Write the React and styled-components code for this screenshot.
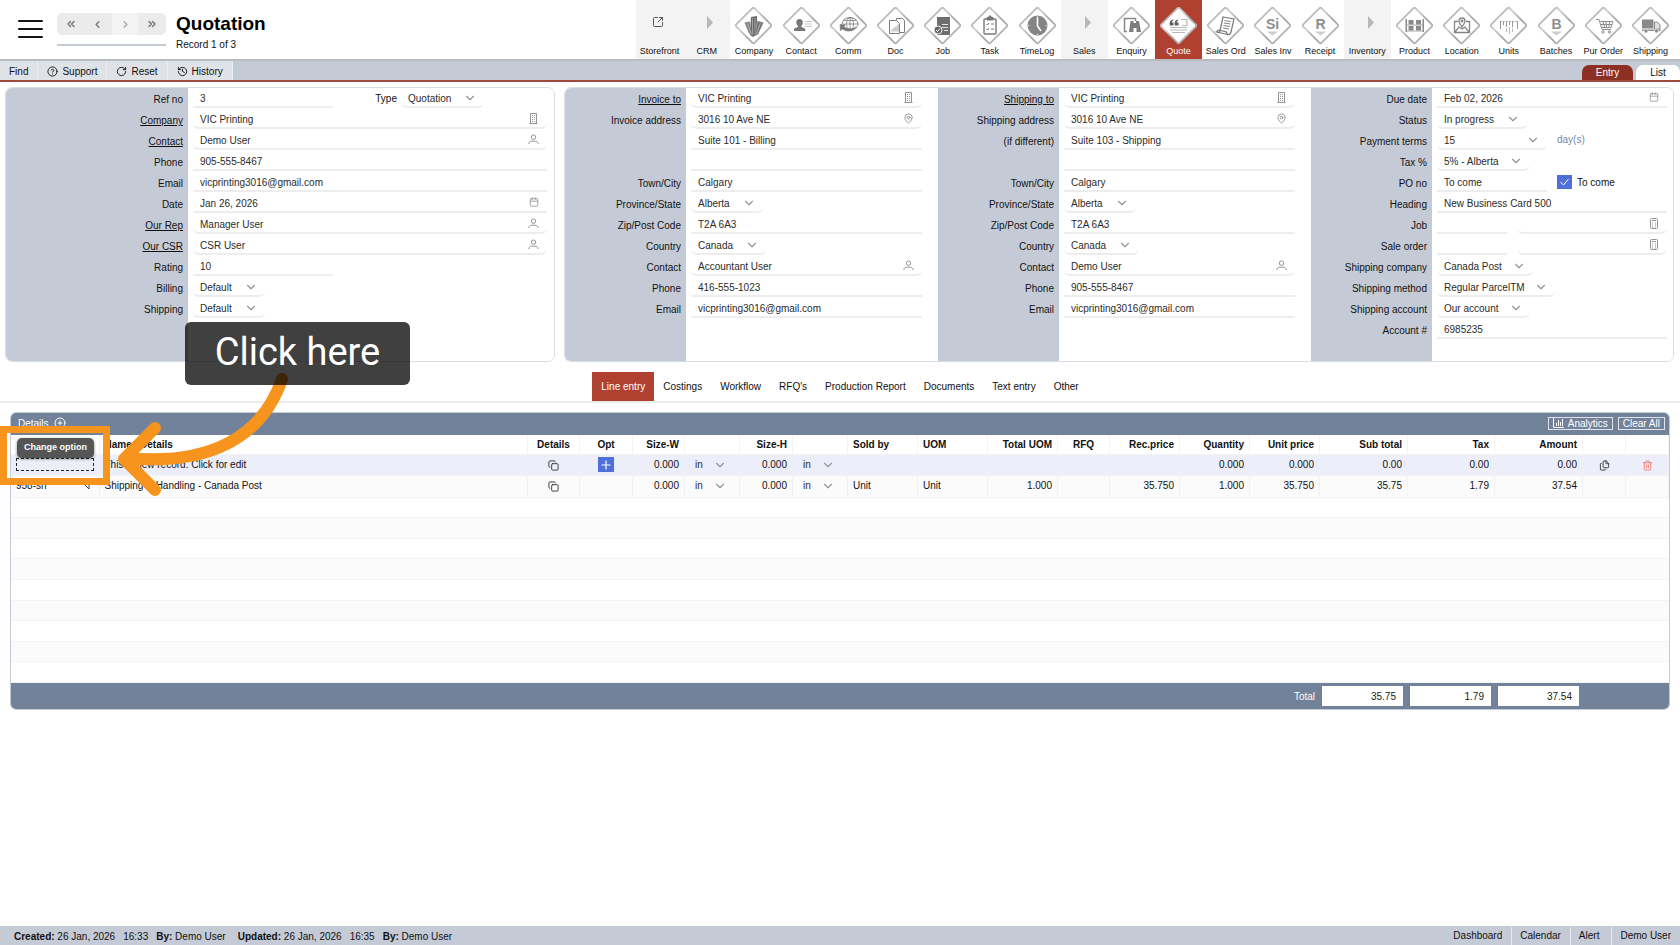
import { useState } from "react";
import styled, { createGlobalStyle } from "styled-components";
import {
  Calendar,
  ChevronDown,
  ChevronLeft,
  ChevronRight,
  ChevronsLeft,
  ChevronsRight,
  CircleHelp,
  CirclePlus,
  Copy,
  Files,
  History,
  MapPin,
  Plus,
  RotateCw,
  SquareArrowOutUpRight,
  Trash2,
} from "lucide-react";

const GlobalStyle = createGlobalStyle`
  * { box-sizing: border-box; }
  body {
    margin: 0;
    background: #fff;
    color: #111;
    font-family: "Liberation Sans", Arial, sans-serif;
    font-size: 10px;
  }
  button, input, select {
    font: inherit;
    color: inherit;
    margin: 0;
  }
  button { cursor: pointer; }
`;

const Page = styled.div`
  position: relative;
  display: flex;
  flex-direction: column;
  min-height: 100vh;
`;

const Defs = styled.svg`
  position: absolute;
`;

const Header = styled.header`
  display: flex;
  height: 61px;
  border-bottom: 2px solid #b9bbc0;
`;

const MenuButton = styled.button`
  display: flex;
  flex-direction: column;
  gap: 6px;
  width: 25px;
  height: 18px;
  margin: 20px 14px 0 18px;
  padding: 0;
  border: none;
  background: none;

  span {
    height: 2px;
    border-radius: 1px;
    background: #151515;
  }
`;

const Pager = styled.div`
  width: 109px;
  height: 33px;
  margin-top: 13px;
  border-bottom: 2px solid #c5cbd6;
`;

const PagerButtons = styled.div`
  display: flex;
  height: 22px;
  border-radius: 5px;
  overflow: hidden;
`;

const PagerButton = styled.button`
  display: flex;
  flex: 1;
  align-items: center;
  justify-content: center;
  padding: 0;
  border: none;
  background: #ebebeb;
  color: #777;

  &:disabled {
    background: #f3f3f3;
    color: #aaa;
  }
`;

const TitleBlock = styled.div`
  margin: 13px 0 0 10px;
`;

const Title = styled.h1`
  margin: 0;
  font-size: 19px;
  line-height: 22px;
  color: #000;
`;

const Record = styled.div`
  margin-top: 3px;
  line-height: 13px;
`;

const Modules = styled.nav`
  display: grid;
  grid-template-columns: repeat(22, 1fr);
  width: 1038px;
  margin: 0 6px 0 auto;
`;

const ModuleLink = styled.a`
  display: flex;
  flex-direction: column;
  align-items: center;
  padding-top: 7px;
  background: ${(p) => (p.$active ? "#b04030" : p.$group ? "#f3f3f3" : "#fff")};
  color: ${(p) => (p.$active ? "#fff" : "#111")};
  font-size: 9px;
  line-height: 12px;
  white-space: nowrap;
  text-decoration: none;
`;

const Toolbar = styled.div`
  display: flex;
  height: 21px;
  border-bottom: 2px solid #a04a3f;
  background: #c5cbd6;
`;

const ToolButton = styled.button`
  display: flex;
  align-items: center;
  gap: 4px;
  padding: 1px 9px 0;
  border: none;
  border-right: 1px solid #eceef1;
  background: #dfe3e8;
`;

const ViewTabs = styled.div`
  display: flex;
  gap: 3px;
  align-items: flex-end;
  margin-left: auto;
`;

const ViewTab = styled.button`
  width: ${(p) => (p.$active ? 51 : 44)}px;
  height: 15px;
  padding: 0;
  border: none;
  border-radius: 7px 7px 0 0;
  background: ${(p) => (p.$active ? "#8d3023" : "#fff")};
  color: ${(p) => (p.$active ? "#fff" : "#111")};
`;

const Panels = styled.form`
  display: grid;
  grid-template-columns: minmax(0, 550fr) minmax(0, 1110fr);
  gap: 9px;
  padding: 5px 6px 0 5px;
`;

const Panel = styled.div`
  display: flex;
  min-height: 275px;
  border: 1px solid #d8dee6;
  border-radius: 7px;
  overflow: hidden;
`;

const Section = styled.section`
  flex: ${(p) => p.$grow || 1};
  min-width: 0;
  background: linear-gradient(to right, #c5cbd6 ${(p) => p.$label}px, #fff ${(p) => p.$label}px);
`;

const Row = styled.div`
  display: grid;
  grid-template-columns: ${(p) => p.$label}px minmax(0, 1fr);
  height: 21px;
`;

const Label = styled.label`
  padding: 5px 5px 0 0;
  line-height: 13px;
  text-align: right;
  text-decoration: ${(p) => (p.$link ? "underline" : "none")};
`;

const Values = styled.div`
  display: flex;
  gap: 10px;
  padding: 0 ${(p) => p.$right}px 0 5px;
`;

const Field = styled.div`
  position: relative;
  flex: ${(p) => (p.$w ? `0 0 ${p.$w}px` : "1")};
  height: 20px;
  color: #2b2b2b;

  > svg {
    position: absolute;
    top: 4px;
    right: 8px;
    color: #949494;
    pointer-events: none;
  }
`;

const TextInput = styled.input`
  display: block;
  width: 100%;
  height: 20px;
  padding: 2px 7px 0;
  border: none;
  border-bottom: 2px solid #ededed;
  border-radius: ${(p) => (p.$round ? 6 : 0)}px;
  background: transparent;
  outline: none;
`;

const SelectInput = styled.select`
  display: block;
  width: 100%;
  height: 20px;
  padding: ${(p) => (p.$plain ? "0 5px" : "2px 7px 0")};
  border: none;
  border-bottom: ${(p) => (p.$plain ? "none" : "2px solid #ededed")};
  border-radius: 6px;
  background: transparent;
  appearance: none;
  outline: none;
`;

const SideLabel = styled.label`
  margin-left: auto;
  margin-right: -6px;
  line-height: 21px;
`;

const Unit = styled.span`
  line-height: 20px;
  color: #7388ad;
`;

const CheckLabel = styled.label`
  display: flex;
  align-items: center;
  gap: 5px;
  height: 20px;
`;

const CheckInput = styled.input`
  width: 15px;
  height: 14px;
  appearance: none;
  background: #4f70d8;
`;

const CheckWrap = styled.span`
  position: relative;
  display: flex;

  svg {
    position: absolute;
    top: 2px;
    left: 2px;
    pointer-events: none;
  }
`;

const Tabs = styled.nav`
  display: flex;
  justify-content: center;
  margin-top: 10px;
  border-bottom: 2px solid #ececec;
`;

const Tab = styled.button`
  height: 29px;
  padding: 0 9px;
  border: none;
  background: ${(p) => (p.$active ? "#b04030" : "transparent")};
  color: ${(p) => (p.$active ? "#fff" : "#111")};
`;

const Details = styled.section`
  margin: 9px 10px 0;
  border: 1px solid #c3cbd6;
  border-radius: 6px;
  overflow: hidden;
`;

const DetailsBar = styled.div`
  display: flex;
  align-items: center;
  gap: 5px;
  height: 22px;
  padding: 0 4px 2px 7px;
  background: #71829a;
  color: #fff;
`;

const DetailsTitle = styled.h2`
  margin: 0;
  font-size: 10px;
  font-weight: normal;
`;

const IconButton = styled.button`
  display: inline-flex;
  align-items: center;
  justify-content: center;
  padding: 0;
  border: none;
  background: none;
  color: ${(p) => p.$color || "inherit"};
  vertical-align: middle;
`;

const BarActions = styled.div`
  display: flex;
  gap: 5px;
  margin-left: auto;
`;

const BarButton = styled.button`
  display: flex;
  align-items: center;
  gap: 4px;
  height: 13px;
  padding: 0 4px;
  border: 1px solid #dfe3e9;
  background: transparent;
  color: #fff;
`;

const Table = styled.table`
  width: 100%;
  height: 248px;
  border-collapse: collapse;
  table-layout: fixed;
`;

const Tr = styled.tr`
  background: ${(p) => (p.$selected ? "#eceefa" : p.$alt ? "#fbfbfb" : "#fff")};
  border-bottom: 1px solid #f3f3f3;
`;

const Th = styled.th`
  height: 19px;
  padding: 1px 5px 0;
  border-right: 1px solid #f3f3f3;
  text-align: ${(p) => p.$align};
  white-space: nowrap;
`;

const Td = styled.td`
  height: 20px;
  padding: 0 5px;
  border-right: ${(p) => (p.$open ? "none" : "1px solid #f1f1f3")};
  text-align: ${(p) => p.$align};
  line-height: 12px;
  white-space: nowrap;
`;

const AddButton = styled(IconButton)`
  width: 16px;
  height: 15px;
  background: #4f70d8;
  color: #fff;
`;

const CodeCell = styled.div`
  display: flex;
  align-items: center;
  justify-content: space-between;
  padding-right: 4px;
`;

const CodeInput = styled.input`
  display: block;
  width: 100%;
  height: 13px;
  padding: 0 2px;
  border: 1px dashed #222;
  background: transparent;
  outline: none;
`;

const TotalBar = styled.div`
  display: flex;
  align-items: center;
  justify-content: flex-end;
  gap: 7px;
  height: 26px;
  padding-right: 90px;
  background: #71829a;
  color: #fff;
`;

const TotalInput = styled.input`
  width: 81px;
  height: 20px;
  padding: 0 7px;
  border: none;
  background: #fff;
  color: #222;
  text-align: right;
`;

const StatusBar = styled.footer`
  display: flex;
  align-items: center;
  height: 19px;
  margin-top: auto;
  padding: 1px 0 0 14px;
  background: #c5cbd6;
`;

const Stamp = styled.span`
  margin-right: ${(p) => p.$gap || 8}px;
`;

const StatusLinks = styled.nav`
  display: flex;
  align-self: stretch;
  margin-left: auto;
`;

const StatusLink = styled.a`
  padding: 0 9px 0 8px;
  border-left: 1px solid #e6e9ee;
  color: inherit;
  line-height: 18px;
  text-decoration: none;

  &:first-child { border-left: none; }
  &:nth-child(3) { padding-right: 12px; }
`;

// Guide overlay

const HighlightBox = styled.div`
  position: absolute;
  top: 426px;
  left: 0;
  width: 110px;
  height: 59px;
  border: 7px solid #f7941d;
`;

const HintTip = styled.div`
  position: absolute;
  top: 438px;
  left: 17px;
  width: 77px;
  height: 20px;
  border-radius: 5px;
  background: #555;
  box-shadow: 0 1px 3px rgba(0, 0, 0, 0.5);
  color: #fff;
  font-size: 9px;
  font-weight: bold;
  line-height: 19px;
  text-align: center;
`;

const Arrow = styled.svg`
  position: absolute;
  top: 360px;
  left: 110px;
  pointer-events: none;
`;

const Callout = styled.div`
  position: absolute;
  top: 322px;
  left: 185px;
  width: 225px;
  height: 63px;
  border-radius: 6px;
  background: rgba(0, 0, 0, 0.75);
  color: #fff;
  font-family: Roboto, sans-serif;
  font-size: 38px;
  line-height: 61px;
  text-align: center;
`;

const glyphs = {
  Company: (
    <g fill="#6a6a6a">
      <path d="M16 10l6-1v5l-1 14-3 2-3-2z" />
      <path d="M9.500 15.500l5.500-1 2 14-3-2z" fill="#858585" />
      <path d="M22.500 14l6 1.500-5.500 12-3 1z" fill="#777" />
      <path d="M17.500 11v17M20 10.500v17M12.500 16l3.500 11M25.500 16l-4 11" stroke="#c8c8c8" strokeWidth=".6" />
    </g>
  ),
  Contact: (
    <g>
      <path d="M16.500 12c2.300 0 3.300 1.600 3.300 3.400 0 1.600-.8 2.800-1.500 3.500v1.200c1.500.7 4 .9 4 2.600V24H11v-1.300c0-1.700 2.500-1.900 4-2.600v-1.200c-.8-.7-1.700-1.900-1.700-3.500 0-1.800 1-3.400 3.200-3.400z" fill="#777" />
      <path d="M22 14.500h7M22 17h7M22 19.500h7" stroke="#c4c4c4" />
    </g>
  ),
  Comm: (
    <g fill="none" stroke="#7d7d7d">
      <ellipse cx="20" cy="17" rx="8" ry="6.500" />
      <ellipse cx="20" cy="17" rx="3.500" ry="6.500" strokeWidth=".8" />
      <path d="M12 17h16M13.500 13.500h13M20 10.500v13" strokeWidth=".8" />
      <path d="M9.500 17h7l-2 2.500c4 2.500 9 2 13.500-1-3 6-10 8-15.500 4l-2.500 2z" fill="#777" stroke="#fff" strokeWidth=".5" />
    </g>
  ),
  Doc: (
    <g fill="#fff" stroke="#7d7d7d">
      <path d="M19.500 11.500h6l2 2v12h-8z" />
      <path d="M12.500 13.500h7l3 3v10h-10z" />
      <path d="M15 24.500v-2M17 24.500v-4M19 24.500v-5M21 24.500v-7" stroke="#999" />
    </g>
  ),
  Job: (
    <g>
      <path d="M13 10h13v18H13z" fill="#6e6e6e" />
      <path d="M18 17.500h6M18 20.500h6M20 23.500h4" stroke="#e5e5e5" />
      <circle cx="14" cy="23" r="4" fill="#666" stroke="#eee" />
      <path d="M12 23l1.500 1.500 2.500-3" fill="none" stroke="#fff" />
    </g>
  ),
  Task: (
    <g fill="none" stroke="#777">
      <rect x="13" y="12" width="12" height="15" rx="1" strokeWidth="1.400" />
      <path d="M16 13v-2.500h2V9h2v1.500h2V13z" fill="#777" />
      <path d="M15.500 17l1 1 1.500-2M15.500 22l1 1 1.500-2M20 17h3M20 22h3" />
    </g>
  ),
  TimeLog: (
    <g>
      <circle cx="18.500" cy="18.500" r="10" fill="#858585" />
      <path d="M18.500 10.500V19l3.500 5" fill="none" stroke="#fff" strokeWidth="1.600" />
      <path d="M18.500 9v1.500M18.500 26.500V28M9 18.500h1.500M26.500 18.500H28" stroke="#ddd" />
    </g>
  ),
  Enquiry: (
    <g>
      <path d="M14 24.500h-2.500v-13h11V14" fill="none" stroke="#888" strokeWidth="1.500" />
      <path d="M17.500 14h3v2h2.500v-2h3l2 11h-4.500v-4h-3v4H16z" fill="#7d7d7d" />
    </g>
  ),
  Quote: (
    <g>
      <path d="M10 18.500c-1-3 .3-5.500 3-6l.3 1c-1 .4-1.500 1-1.500 2h1.700v3zm5 0c-1-3 .3-5.500 3-6l.3 1c-1 .4-1.500 1-1.500 2h1.700v3z" fill="#5c5c5c" />
      <path d="M21 12.500h6v6h-5M10 20.500h17M10 23h17M12 25.500h13" stroke="#b8b8b8" fill="none" strokeWidth="1.200" />
    </g>
  ),
  "Sales Ord": (
    <g fill="none" stroke="#777" strokeWidth="1.200">
      <path d="M16 10l11 2-3 13c-.5 2-2 3-3.500 2.500L10 25c1 1 2.500.5 3-1z" />
      <path d="M10 25c0-1 .5-2 1.500-2l8 2c0 1.500.5 2 1.500 2.500" />
      <path d="M17.500 13.500l6.500 1M17 16l6.500 1M16.500 18.500l6.500 1M16 21l6 1" strokeWidth=".9" />
    </g>
  ),
  Product: (
    <g fill="#8a8a8a">
      <path d="M9.500 12h1.500v13H9.500zM26.500 12H28v13h-1.500z" />
      <path d="M11 17.500h16v1H11zM11 23.500h16v1H11z" fill="#aaa" />
      <path d="M12.500 13h5v4.500h-5zM20 13h5v4.500h-5zM12.500 19h5v4.500h-5zM20 19h5v4.500h-5z" />
    </g>
  ),
  Location: (
    <g fill="none" stroke="#858585" strokeWidth="1.300">
      <path d="M15 14.500h-3.500v11h15v-11H23M12 25l4-5 3 2 3-2 4 5" />
      <path d="M19 20c-2-3-3-4.500-3-6a3 3 0 016 0c0 1.500-1 3-3 6z" fill="#fff" />
      <circle cx="19" cy="14" r=".8" />
    </g>
  ),
  Units: (
    <g stroke="#999">
      <path d="M10 14.500h18" stroke="#b4b4b4" strokeDasharray="2 1" />
      <path d="M10.500 14v8M13.500 14v4M16.500 14v6M19.500 14v4M22.500 14v6M27.500 14v8" />
      <path d="M16.500 21v4M19.500 20v7M22.500 21v4" stroke="#bbb" />
    </g>
  ),
  "Pur Order": (
    <g fill="none" stroke="#8c8c8c">
      <path d="M11 12.500h3l3 10h9M15.500 14.500H28l-2 6h-9M18 15l1.500 5M21 15l.5 5M24.500 15l-.5 5M16 17.500h11" />
      <circle cx="18" cy="25" r="1.200" />
      <circle cx="24.500" cy="25" r="1.200" />
    </g>
  ),
  Shipping: (
    <g fill="#8a8a8a">
      <path d="M10 12.500h11.500v9H10z" />
      <path d="M22.500 15h3l2.500 3v4h-5.500z" fill="#e2e2e2" stroke="#8a8a8a" />
      <path d="M10 22.500h18.500V24H10z" />
      <circle cx="14" cy="24" r="2" stroke="#fff" strokeWidth=".6" />
      <circle cx="24.500" cy="24" r="2" stroke="#fff" strokeWidth=".6" />
    </g>
  ),
};

const letters = { "Sales Inv": "Si", Receipt: "R", Batches: "B" };

const modules = [
  "Storefront", "CRM", "Company", "Contact", "Comm", "Doc", "Job", "Task",
  "TimeLog", "Sales", "Enquiry", "Quote", "Sales Ord", "Sales Inv", "Receipt",
  "Inventory", "Product", "Location", "Units", "Batches", "Pur Order", "Shipping",
];
const groups = ["Storefront", "CRM", "Sales", "Inventory"];

function ModuleIcon({ name }) {
  if (name === "Storefront") {
    return (
      <svg width="37" height="38" viewBox="0 0 37 38">
        <SquareArrowOutUpRight x="11" y="9" width="12" height="12" color="#555" />
      </svg>
    );
  }
  if (groups.includes(name)) {
    return (
      <svg width="37" height="38" viewBox="0 0 37 38">
        <path d="M19 9l6 6.500-6 6.500z" fill="#b8b8b8" />
      </svg>
    );
  }
  return (
    <svg width="37" height="38" viewBox="0 0 37 38">
      <path
        d="M17.300 1.300q1.200-1 2.400 0l16 16q1 1.200 0 2.400l-16 16q-1.200 1-2.400 0l-16-16q-1-1.200 0-2.400z"
        fill="#fff"
        stroke="url(#edge)"
        strokeWidth="1.800"
      />
      {letters[name] && (
        <>
          <text x="18.500" y="22" textAnchor="middle" fontSize="14" fontWeight="bold" fill="#8e8e8e">
            {letters[name]}
          </text>
          <path d="M13 24.500h11l-5.500 4z" fill="#cdcdcd" />
        </>
      )}
      {glyphs[name]}
    </svg>
  );
}

function PersonIcon() {
  return (
    <svg width="11" height="11" viewBox="0 0 11 11" fill="none" stroke="currentColor">
      <circle cx="5.500" cy="3.200" r="2.200" />
      <path d="M.8 10c0-2 1.700-2.800 3-2.800h3.400c1.300 0 3 .8 3 2.800" />
    </svg>
  );
}

function BuildingIcon() {
  return (
    <svg width="11" height="11" viewBox="0 0 11 11" fill="none" stroke="currentColor">
      <path d="M2.500 10.500V.5h6v10M1.500 10.500h8" />
      <path d="M4.500 2v7M6.500 2v7" strokeDasharray="1 1" />
    </svg>
  );
}

function CalculatorIcon() {
  return (
    <svg width="10" height="11" viewBox="0 0 10 11" fill="none" stroke="currentColor">
      <rect x="1.500" y=".5" width="7" height="10" rx="1" />
      <path d="M3 2.500h4M3 5h1M6 5h1M3 7h1M6 7h1M3 9h1M6 9h1" />
    </svg>
  );
}

const icons = {
  person: <PersonIcon />,
  building: <BuildingIcon />,
  calc: <CalculatorIcon />,
  pin: <MapPin size={11} />,
  date: <Calendar size={10} />,
};

const general = [
  { label: "Ref no", value: "3", w: 140, type: true },
  { label: "Company", value: "VIC Printing", link: true, icon: "building" },
  { label: "Contact", value: "Demo User", link: true, icon: "person" },
  { label: "Phone", value: "905-555-8467" },
  { label: "Email", value: "vicprinting3016@gmail.com" },
  { label: "Date", value: "Jan 26, 2026", icon: "date" },
  { label: "Our Rep", value: "Manager User", link: true, icon: "person" },
  { label: "Our CSR", value: "CSR User", link: true, icon: "person" },
  { label: "Rating", value: "10", w: 140 },
  { label: "Billing", value: "Default", select: true, w: 72 },
  { label: "Shipping", value: "Default", select: true, w: 72 },
];

const invoice = [
  { label: "Invoice to", value: "VIC Printing", link: true, icon: "building" },
  { label: "Invoice address", value: "3016 10 Ave NE", icon: "pin" },
  { label: "", value: "Suite 101 - Billing" },
  { label: "", value: "" },
  { label: "Town/City", value: "Calgary" },
  { label: "Province/State", value: "Alberta", select: true, w: 72 },
  { label: "Zip/Post Code", value: "T2A 6A3" },
  { label: "Country", value: "Canada", select: true, w: 75 },
  { label: "Contact", value: "Accountant User", icon: "person" },
  { label: "Phone", value: "416-555-1023" },
  { label: "Email", value: "vicprinting3016@gmail.com" },
];

const shipping = [
  { label: "Shipping to", value: "VIC Printing", link: true, icon: "building" },
  { label: "Shipping address", value: "3016 10 Ave NE", icon: "pin" },
  { label: "(if different)", value: "Suite 103 - Shipping" },
  { label: "", value: "" },
  { label: "Town/City", value: "Calgary" },
  { label: "Province/State", value: "Alberta", select: true, w: 72 },
  { label: "Zip/Post Code", value: "T2A 6A3" },
  { label: "Country", value: "Canada", select: true, w: 75 },
  { label: "Contact", value: "Demo User", icon: "person" },
  { label: "Phone", value: "905-555-8467" },
  { label: "Email", value: "vicprinting3016@gmail.com" },
];

const terms = [
  { label: "Due date", value: "Feb 02, 2026", icon: "date" },
  { label: "Status", value: "In progress", select: true, w: 90 },
  { label: "Payment terms", value: "15", select: true, w: 110, unit: "day(s)" },
  { label: "Tax %", value: "5% - Alberta", select: true, w: 93 },
  { label: "PO no", value: "To come", w: 110, check: "To come" },
  { label: "Heading", value: "New Business Card 500" },
  { label: "Job", value: "", w: 70, pair: true },
  { label: "Sale order", value: "", w: 70, pair: true },
  { label: "Shipping company", value: "Canada Post", select: true, w: 96 },
  { label: "Shipping method", value: "Regular ParcelTM", select: true, w: 118 },
  { label: "Shipping account", value: "Our account", select: true, w: 93 },
  { label: "Account #", value: "6985235" },
];

function Dropdown({ id, value, w, plain, label }) {
  return (
    <Field $w={w}>
      <SelectInput id={id} aria-label={label} $plain={plain} defaultValue={value}>
        <option>{value}</option>
      </SelectInput>
      <svg width="12" height="12" viewBox="0 0 12 12">
        <ChevronDown x="-1" y="-1" width="14" height="14" />
      </svg>
    </Field>
  );
}

function FormSection({ id, rows, label, right, grow }) {
  return (
    <Section $label={label} $grow={grow}>
      {rows.map((row, i) => {
        const fieldId = `${id}-${i}`;
        return (
          <Row key={fieldId} $label={label}>
            <Label htmlFor={fieldId} $link={row.link}>{row.label}</Label>
            <Values $right={right}>
              {row.select ? (
                <Dropdown id={fieldId} value={row.value} w={row.w} />
              ) : (
                <Field $w={row.w}>
                  <TextInput
                    id={fieldId}
                    defaultValue={row.value}
                    $round={row.icon && row.icon !== "date"}
                  />
                  {icons[row.icon]}
                </Field>
              )}
              {row.type && (
                <>
                  <SideLabel htmlFor="type">Type</SideLabel>
                  <Dropdown id="type" value="Quotation" w={83} />
                  <Field $w={53} />
                </>
              )}
              {row.unit && <Unit>{row.unit}</Unit>}
              {row.check && (
                <CheckLabel>
                  <CheckWrap>
                    <CheckInput type="checkbox" defaultChecked />
                    <svg width="11" height="10" viewBox="0 0 11 10">
                      <path d="M1.500 5l3 3 5-6" fill="none" stroke="#fff" />
                    </svg>
                  </CheckWrap>
                  {row.check}
                </CheckLabel>
              )}
              {row.pair && (
                <Field>
                  <TextInput aria-label={`${row.label} name`} $round />
                  {icons.calc}
                </Field>
              )}
            </Values>
          </Row>
        );
      })}
    </Section>
  );
}

const columns = [
  { title: "", w: 88, align: "left" },
  { title: "Name / Details", align: "left" },
  { title: "Details", w: 52, align: "center" },
  { title: "Opt", w: 53, align: "center" },
  { title: "Size-W", w: 52, align: "right" },
  { title: "", w: 55, align: "left" },
  { title: "Size-H", w: 53, align: "right" },
  { title: "", w: 55, align: "left" },
  { title: "Sold by", w: 70, align: "left" },
  { title: "UOM", w: 70, align: "left" },
  { title: "Total UOM", w: 70, align: "right" },
  { title: "RFQ", w: 52, align: "center" },
  { title: "Rec.price", w: 70, align: "right" },
  { title: "Quantity", w: 70, align: "right" },
  { title: "Unit price", w: 70, align: "right" },
  { title: "Sub total", w: 88, align: "right" },
  { title: "Tax", w: 87, align: "right" },
  { title: "Amount", w: 88, align: "right" },
  { title: "", w: 43, align: "center" },
  { title: "", w: 43, align: "center" },
];

const copyIcon = (
  <IconButton aria-label="Open details" $color="#333">
    <Copy size={11} />
  </IconButton>
);
const unitSelect = <Dropdown value="in" plain label="Unit" />;

const lines = [
  [
    <CodeInput aria-label="Code" />,
    "This is new record. Click for edit",
    copyIcon,
    <AddButton aria-label="Add option"><Plus size={14} strokeWidth={2} /></AddButton>,
    "0.000", unitSelect, "0.000", unitSelect,
    "", "", "", "", "", "0.000", "0.000", "0.00", "0.00", "0.00",
    <IconButton aria-label="Duplicate line" $color="#333"><Files size={11} /></IconButton>,
    <IconButton aria-label="Delete line" $color="#f2786c"><Trash2 size={11} /></IconButton>,
  ],
  [
    <CodeCell>
      958-sh
      <svg width="8" height="8" viewBox="0 0 8 8">
        <path d="M1 1l6 0v6z" fill="none" stroke="#444" />
      </svg>
    </CodeCell>,
    "Shipping & Handling - Canada Post",
    copyIcon,
    "",
    "0.000", unitSelect, "0.000", unitSelect,
    "Unit", "Unit", "1.000", "", "35.750", "1.000", "35.750", "35.75", "1.79", "37.54",
    "", "",
  ],
];

const tabNames = [
  "Line entry", "Costings", "Workflow", "RFQ's",
  "Production Report", "Documents", "Text entry", "Other",
];

export default function App() {
  const [tab, setTab] = useState("Line entry");
  const [view, setView] = useState("Entry");

  return (
    <Page>
      <GlobalStyle />
      <Defs width="0" height="0">
        <linearGradient id="edge" x1="0" y1="0" x2="1" y2="1">
          <stop offset="0" stopColor="#8c8c8c" />
          <stop offset=".35" stopColor="#cfcfcf" />
          <stop offset=".6" stopColor="#a2a2a2" />
          <stop offset="1" stopColor="#c9c9c9" />
        </linearGradient>
      </Defs>

      <Header>
        <MenuButton aria-label="Menu">
          <span />
          <span />
          <span />
        </MenuButton>
        <Pager>
          <PagerButtons>
            <PagerButton aria-label="First"><ChevronsLeft size={12} strokeWidth={3} /></PagerButton>
            <PagerButton aria-label="Previous"><ChevronLeft size={11} strokeWidth={3} /></PagerButton>
            <PagerButton aria-label="Next" disabled><ChevronRight size={11} strokeWidth={3} /></PagerButton>
            <PagerButton aria-label="Last"><ChevronsRight size={12} strokeWidth={3} /></PagerButton>
          </PagerButtons>
        </Pager>
        <TitleBlock>
          <Title>Quotation</Title>
          <Record>Record 1 of 3</Record>
        </TitleBlock>
        <Modules>
          {modules.map((name) => (
            <ModuleLink
              key={name}
              href="#"
              $group={groups.includes(name)}
              $active={name === "Quote"}
            >
              <ModuleIcon name={name} />
              {name}
            </ModuleLink>
          ))}
        </Modules>
      </Header>

      <Toolbar>
        <ToolButton>Find</ToolButton>
        <ToolButton><CircleHelp size={11} />Support</ToolButton>
        <ToolButton><RotateCw size={11} />Reset</ToolButton>
        <ToolButton><History size={11} />History</ToolButton>
        <ViewTabs>
          {["Entry", "List"].map((name) => (
            <ViewTab key={name} $active={view === name} onClick={() => setView(name)}>
              {name}
            </ViewTab>
          ))}
        </ViewTabs>
      </Toolbar>

      <Panels>
        <Panel>
          <FormSection id="general" rows={general} label={182} right={7} />
        </Panel>
        <Panel>
          <FormSection id="invoice" rows={invoice} label={121} right={16} grow={373} />
          <FormSection id="shipping" rows={shipping} label={121} right={16} grow={373} />
          <FormSection id="terms" rows={terms} label={121} right={6} grow={362} />
        </Panel>
      </Panels>

      <Tabs>
        {tabNames.map((name) => (
          <Tab key={name} $active={tab === name} onClick={() => setTab(name)}>
            {name}
          </Tab>
        ))}
      </Tabs>

      <Details>
        <DetailsBar>
          <DetailsTitle>Details</DetailsTitle>
          <IconButton aria-label="Add line"><CirclePlus size={12} /></IconButton>
          <BarActions>
            <BarButton>
              <svg width="11" height="10" viewBox="0 0 11 10" stroke="#fff" fill="none">
                <path d="M.5 0v9.500H11M3.500 8V5M5.500 8V2M7.500 8V4M9.500 8V1" />
              </svg>
              Analytics
            </BarButton>
            <BarButton>Clear All</BarButton>
          </BarActions>
        </DetailsBar>
        <Table>
          <colgroup>
            {columns.map((col, i) => (
              <col key={i} width={col.w} />
            ))}
          </colgroup>
          <thead>
            <Tr>
              {columns.map((col, i) => (
                <Th key={i} $align={col.align}>{col.title}</Th>
              ))}
            </Tr>
          </thead>
          <tbody>
            {lines.map((cells, i) => (
              <Tr key={i} $selected={i === 0} $alt={i === 1}>
                {cells.map((cell, j) => (
                  <Td key={j} $align={columns[j].align}>{cell}</Td>
                ))}
              </Tr>
            ))}
            {Array.from({ length: 9 }, (_, i) => (
              <Tr key={i} $alt={i % 2 === 1}>
                <Td colSpan={columns.length} $open />
              </Tr>
            ))}
          </tbody>
        </Table>
        <TotalBar>
          <span>Total</span>
          <TotalInput aria-label="Sub total" readOnly value="35.75" />
          <TotalInput aria-label="Tax total" readOnly value="1.79" />
          <TotalInput aria-label="Amount total" readOnly value="37.54" />
        </TotalBar>
      </Details>

      <StatusBar>
        <Stamp><b>Created:</b> 26 Jan, 2026</Stamp>
        <Stamp>16:33</Stamp>
        <Stamp $gap={12}><b>By:</b> Demo User</Stamp>
        <Stamp><b>Updated:</b> 26 Jan, 2026</Stamp>
        <Stamp>16:35</Stamp>
        <Stamp><b>By:</b> Demo User</Stamp>
        <StatusLinks>
          <StatusLink href="#">Dashboard</StatusLink>
          <StatusLink href="#">Calendar</StatusLink>
          <StatusLink href="#">Alert</StatusLink>
          <StatusLink href="#">Demo User</StatusLink>
        </StatusLinks>
      </StatusBar>

      <HighlightBox />
      <HintTip>Change option</HintTip>
      <Arrow width="190" height="145" viewBox="110 360 190 145">
        <path
          d="M282 379C262 438 208 466 126 458M155 428L124 459L155 490"
          fill="none"
          stroke="#f7941d"
          strokeWidth="12"
          strokeLinecap="round"
          strokeLinejoin="round"
        />
      </Arrow>
      <Callout>Click here</Callout>
    </Page>
  );
}
